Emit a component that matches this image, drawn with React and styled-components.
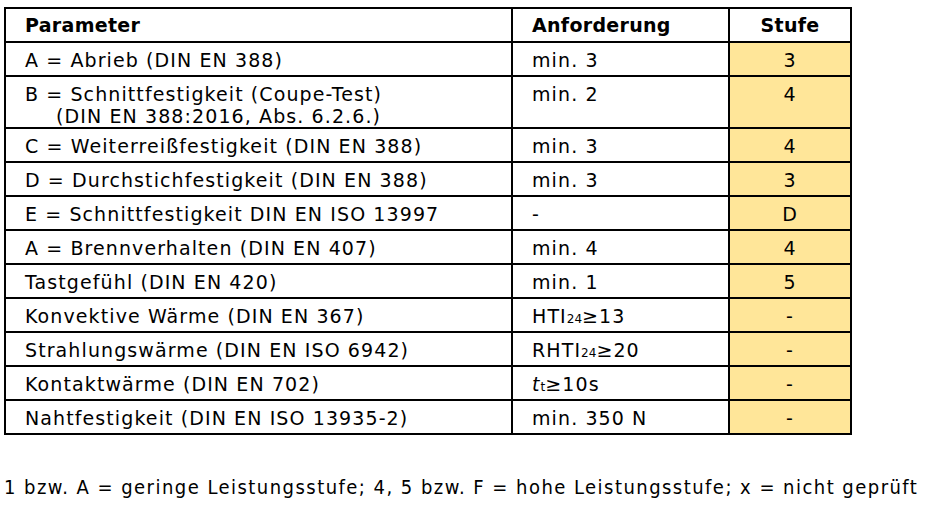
import React from "react";
import styled, { createGlobalStyle } from "styled-components";

const Global = createGlobalStyle`
  html, body { margin: 0; padding: 0; background: #fff; }
  body { font-family: "DejaVu Sans", Verdana, sans-serif; color: #000; }
`;

const Page = styled.div`
  width: 927px;
  height: 507px;
  padding: 7px 0 0 4px;
  box-sizing: border-box;
  display: flex;
  flex-direction: column;
`;

const Table = styled.table`
  border-collapse: collapse;
  table-layout: fixed;
  width: 848px;
`;

const Col = styled.col`
  width: ${(p) => p.$w}px;
`;

const Row = styled.tr`
  height: ${(p) => p.$h || 34}px;
`;

const Cell = styled.td`
  border: 2px solid #000;
  padding: ${(p) => (p.$center ? "6px 0 0 0" : "6px 0 0 19px")};
  vertical-align: top;
  text-align: ${(p) => (p.$center ? "center" : "left")};
  background: ${(p) => (p.$hl ? "#FFE699" : "#fff")};
  font-size: 19px;
  line-height: 22px;
  white-space: nowrap;
  letter-spacing: 1.1px;
`;

const Head = styled(Cell).attrs({ as: "th" })`
  font-weight: bold;
  font-size: 19px;
  letter-spacing: 0.3px;
  padding-top: 5px;
`;

const Indent = styled.span`
  display: block;
  padding-left: 31px;
`;

const Sub = styled.span`
  font-size: 12px;
  letter-spacing: 0;
`;

const It = styled.i`
  font-style: italic;
`;

const Note = styled.p`
  margin: 41px 0 0 0;
  font-family: "DejaVu Sans Condensed", "Liberation Sans Narrow", "Liberation Sans", sans-serif;
  font-size: 20px;
  line-height: 22px;
  letter-spacing: 1.46px;
  white-space: nowrap;
`;

const rows = [
  ["A = Abrieb (DIN EN 388)", "min. 3", "3"],
  [
    <>
      B = Schnittfestigkeit (Coupe-Test)
      <Indent>(DIN EN 388:2016, Abs. 6.2.6.)</Indent>
    </>,
    "min. 2",
    "4",
    52,
  ],
  ["C = Weiterreißfestigkeit (DIN EN 388)", "min. 3", "4"],
  ["D = Durchstichfestigkeit (DIN EN 388)", "min. 3", "3"],
  ["E = Schnittfestigkeit DIN EN ISO 13997", "-", "D"],
  ["A = Brennverhalten (DIN EN 407)", "min. 4", "4"],
  ["Tastgefühl (DIN EN 420)", "min. 1", "5"],
  [
    "Konvektive Wärme (DIN EN 367)",
    <>
      HTI<Sub>24</Sub>≥13
    </>,
    "-",
  ],
  [
    "Strahlungswärme (DIN EN ISO 6942)",
    <>
      RHTI<Sub>24</Sub>≥20
    </>,
    "-",
  ],
  [
    "Kontaktwärme (DIN EN 702)",
    <>
      <It>t</It>
      <Sub>t</Sub>≥10s
    </>,
    "-",
  ],
  ["Nahtfestigkeit (DIN EN ISO 13935-2)", "min. 350 N", "-"],
];

export default function App() {
  return (
    <Page>
      <Global />
      <Table>
        <colgroup>
          <Col $w={507} />
          <Col $w={217} />
          <Col $w={122} />
        </colgroup>
        <thead>
          <Row $h={34}>
            <Head>Parameter</Head>
            <Head>Anforderung</Head>
            <Head $center>Stufe</Head>
          </Row>
        </thead>
        <tbody>
          {rows.map((r, i) => (
            <Row key={i} $h={r[3] || 34}>
              <Cell>{r[0]}</Cell>
              <Cell>{r[1]}</Cell>
              <Cell $center $hl>
                {r[2]}
              </Cell>
            </Row>
          ))}
        </tbody>
      </Table>
      <Note>
        1 bzw. A = geringe Leistungsstufe; 4, 5 bzw. F = hohe Leistungsstufe; x = nicht geprüft
      </Note>
    </Page>
  );
}
